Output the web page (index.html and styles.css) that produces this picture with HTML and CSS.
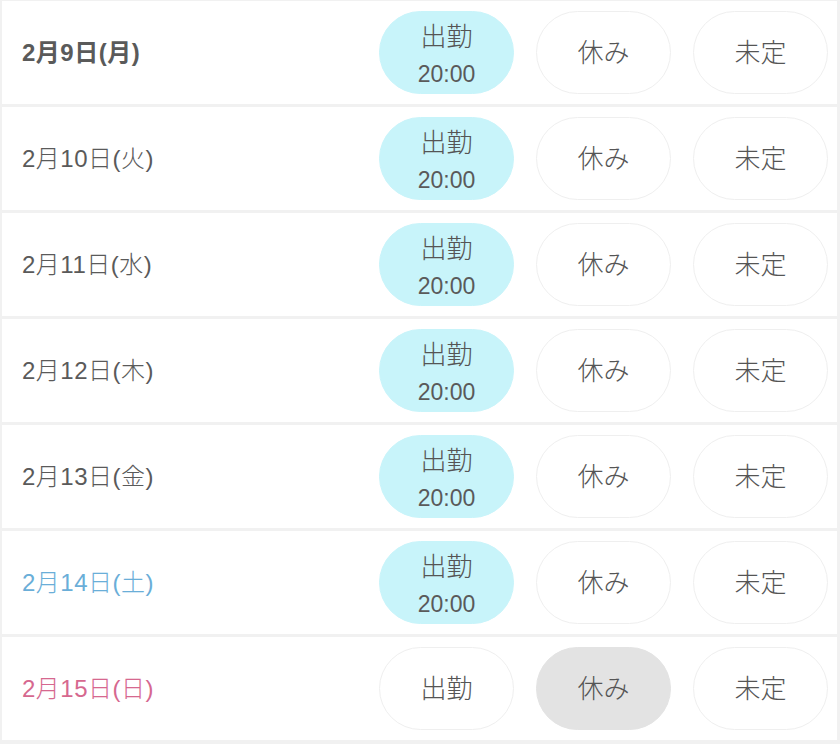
FILE: index.html
```html
<!DOCTYPE html>
<html lang="ja">
<head>
<meta charset="utf-8">
<title>シフト</title>
<link rel="stylesheet" href="styles.css">
</head>
<body>
<div class="list">
  <div class="row">
    <div class="date bold">2月9日(月)</div>
    <div class="choices">
      <div class="pill two on"><span class="main">出勤</span><span class="time">20:00</span></div>
      <div class="pill"><span class="main">休み</span></div>
      <div class="pill"><span class="main">未定</span></div>
    </div>
  </div>
  <div class="row">
    <div class="date">2月10日(火)</div>
    <div class="choices">
      <div class="pill two on"><span class="main">出勤</span><span class="time">20:00</span></div>
      <div class="pill"><span class="main">休み</span></div>
      <div class="pill"><span class="main">未定</span></div>
    </div>
  </div>
  <div class="row">
    <div class="date">2月11日(水)</div>
    <div class="choices">
      <div class="pill two on"><span class="main">出勤</span><span class="time">20:00</span></div>
      <div class="pill"><span class="main">休み</span></div>
      <div class="pill"><span class="main">未定</span></div>
    </div>
  </div>
  <div class="row">
    <div class="date">2月12日(木)</div>
    <div class="choices">
      <div class="pill two on"><span class="main">出勤</span><span class="time">20:00</span></div>
      <div class="pill"><span class="main">休み</span></div>
      <div class="pill"><span class="main">未定</span></div>
    </div>
  </div>
  <div class="row">
    <div class="date">2月13日(金)</div>
    <div class="choices">
      <div class="pill two on"><span class="main">出勤</span><span class="time">20:00</span></div>
      <div class="pill"><span class="main">休み</span></div>
      <div class="pill"><span class="main">未定</span></div>
    </div>
  </div>
  <div class="row">
    <div class="date sat">2月14日(土)</div>
    <div class="choices">
      <div class="pill two on"><span class="main">出勤</span><span class="time">20:00</span></div>
      <div class="pill"><span class="main">休み</span></div>
      <div class="pill"><span class="main">未定</span></div>
    </div>
  </div>
  <div class="row">
    <div class="date sun">2月15日(日)</div>
    <div class="choices">
      <div class="pill"><span class="main">出勤</span></div>
      <div class="pill off"><span class="main">休み</span></div>
      <div class="pill"><span class="main">未定</span></div>
    </div>
  </div>
</div>
</body>
</html>
```

FILE: styles.css
```css
* {
  box-sizing: border-box;
}

html, body {
  margin: 0;
  padding: 0;
  background: #f1f1f1;
}

body {
  font-family: "Liberation Sans", "Noto Sans CJK JP", sans-serif;
  color: #555555;
}

.list {
  display: flex;
  flex-direction: column;
  gap: 3px;
  padding: 1px 3px 0 2px;
}

.row {
  height: 103px;
  background: #ffffff;
  display: flex;
  align-items: center;
  justify-content: space-between;
  padding: 0 9px 0 20px;
}

.date {
  margin-bottom: 4px;
  font-size: 24px;
  font-weight: 300;
  letter-spacing: 0.5px;
  color: #5a5a5a;
}

.date.bold {
  font-weight: bold;
}

.date.sat {
  color: #6aaed8;
}

.date.sun {
  color: #d6688f;
}

.choices {
  display: flex;
  gap: 22px;
}

.pill {
  width: 135px;
  height: 83px;
  border: 1px solid #efefef;
  border-radius: 42px;
  background: #ffffff;
  display: flex;
  flex-direction: column;
  align-items: center;
  justify-content: center;
}

.pill.two {
  justify-content: flex-start;
  padding-top: 8px;
}

.pill.on {
  background: #c8f4fa;
  border-color: #c8f4fa;
}

.pill.off {
  background: #e3e3e3;
  border-color: #e3e3e3;
}

.main {
  font-size: 26px;
  font-weight: 300;
  line-height: 34px;
  color: #555555;
}

.time {
  margin-top: 3px;
  font-size: 23px;
  line-height: 34px;
  color: #5a5a5a;
}
```
